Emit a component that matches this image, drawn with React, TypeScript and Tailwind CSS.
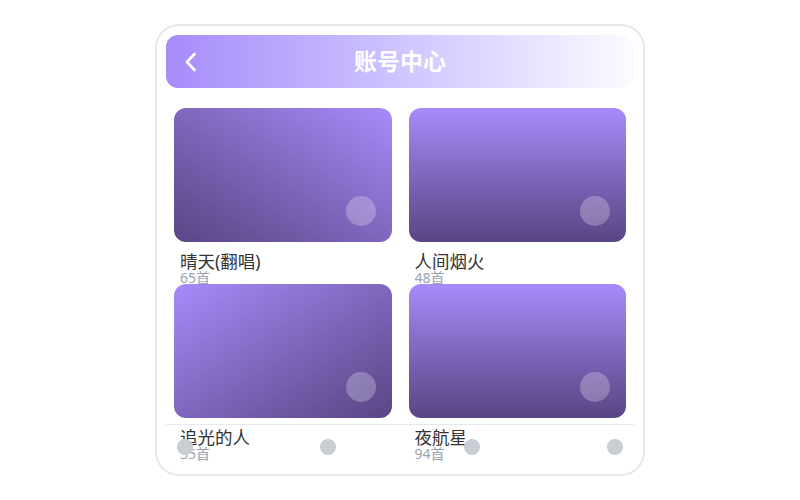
import React from "react"

type Album = { title: string; count: string; grad: string }

// gradient direction differs per card, as in the shot
const ALBUMS: Album[] = [
  { title: "晴天(翻唱)", count: "65首", grad: "bg-linear-to-bl" },
  { title: "人间烟火", count: "48首", grad: "bg-linear-to-b" },
  { title: "追光的人", count: "35首", grad: "bg-linear-to-br" },
  { title: "夜航星", count: "94首", grad: "bg-linear-to-b" },
]

function AlbumCard({ album }: { album: Album }) {
  return (
    <div className="h-[176px]">
      <div
        className={`relative h-[134px] rounded-[12px] ${album.grad} from-[#a78bfa] to-[#594684]`}
      >
        <div className="absolute bottom-4 right-4 h-[30px] w-[30px] rounded-full bg-white/25" />
      </div>
      <div className="mt-[10px] pl-1.5">
        <div className="text-[17.5px] leading-[19px] text-[#333]">{album.title}</div>
        <div className="text-[14px] leading-[14px] text-[#9ca3af]">{album.count}</div>
      </div>
    </div>
  )
}

export default function App() {
  return (
    <div
      className="flex h-[500px] w-[800px] items-start justify-center bg-white pt-6"
      style={{ fontFamily: '"Noto Sans", "Noto Sans CJK SC", sans-serif' }}
    >
      <div className="relative h-[452px] w-[490px] overflow-hidden rounded-[24px] border-2 border-[#e5e7eb] bg-white px-[9px] pt-[9px]">
        {/* header */}
        <div className="relative flex h-[53px] items-center justify-center rounded-[12px] bg-linear-to-r from-[#a68bf9] to-[#fcfbff]">
          <svg
            className="absolute left-[18px] top-[17px]"
            width="14"
            height="20"
            viewBox="0 0 14 20"
            fill="none"
            stroke="white"
            strokeWidth="2.6"
            strokeLinecap="round"
            strokeLinejoin="round"
          >
            <path d="M10.5 2 L3 10 L10.5 18" />
          </svg>
          <span className="text-[23px] font-bold text-white">账号中心</span>
        </div>

        {/* album grid */}
        <div className="mt-5 grid grid-cols-2 gap-x-[17px] px-2">
          {ALBUMS.map((a) => (
            <AlbumCard key={a.title} album={a} />
          ))}
        </div>

        {/* bottom bar */}
        <div className="absolute bottom-[6px] left-[9px] right-[9px] flex h-[44px] items-center justify-between border-t border-[#e8e8ee] px-[11px]">
          {[0, 1, 2, 3].map((i) => (
            <div key={i} className="h-4 w-4 rounded-full bg-[#c9cdd4]" />
          ))}
        </div>
      </div>
    </div>
  )
}
